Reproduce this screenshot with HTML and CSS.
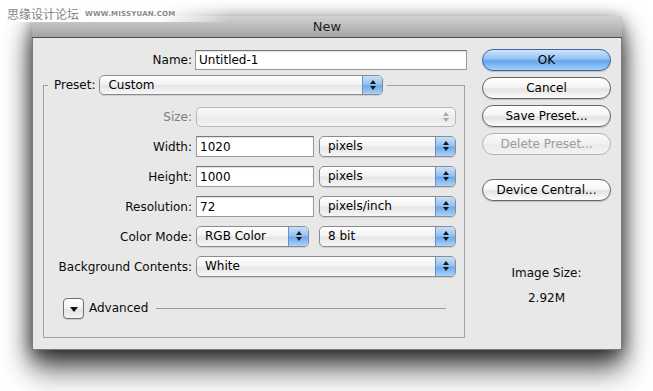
FILE: index.html
```html
<!DOCTYPE html>
<html lang="en">
<head>
    <meta charset="UTF-8">
    <title>New</title>
    <link rel="stylesheet" href="styles.css">
</head>
<body>
    <div class="watermark">
        <span class="wm-cn">思缘设计论坛</span>
        <span class="wm-url">WWW.MISSYUAN.COM</span>
    </div>

    <div class="page">
        <div class="dialog">
            <div class="titlebar">New</div>

            <div class="dialog-body">
                <div class="main">
                    <div class="name-row">
                        <label class="label">Name:</label>
                        <input class="field name-field" type="text" value="Untitled-1">
                    </div>

                    <fieldset class="preset-box">
                        <legend class="preset-legend">
                            <span class="label">Preset:</span>
                            <div class="popup preset-popup">
                                <span class="popup-text">Custom</span>
                                <span class="popup-arrows"></span>
                            </div>
                        </legend>

                        <div class="rows">
                            <div class="row row-size">
                                <span class="label disabled">Size:</span>
                                <div class="controls">
                                    <div class="popup popup-disabled full">
                                        <span class="popup-text"></span>
                                        <span class="popup-arrows"></span>
                                    </div>
                                </div>
                            </div>
                            <div class="row">
                                <span class="label">Width:</span>
                                <div class="controls">
                                    <input class="field num-field" type="text" value="1020">
                                    <div class="popup unit-popup">
                                        <span class="popup-text">pixels</span>
                                        <span class="popup-arrows"></span>
                                    </div>
                                </div>
                            </div>
                            <div class="row">
                                <span class="label">Height:</span>
                                <div class="controls">
                                    <input class="field num-field" type="text" value="1000">
                                    <div class="popup unit-popup">
                                        <span class="popup-text">pixels</span>
                                        <span class="popup-arrows"></span>
                                    </div>
                                </div>
                            </div>
                            <div class="row">
                                <span class="label">Resolution:</span>
                                <div class="controls">
                                    <input class="field num-field" type="text" value="72">
                                    <div class="popup unit-popup">
                                        <span class="popup-text">pixels/inch</span>
                                        <span class="popup-arrows"></span>
                                    </div>
                                </div>
                            </div>
                            <div class="row">
                                <span class="label">Color Mode:</span>
                                <div class="controls">
                                    <div class="popup mode-popup">
                                        <span class="popup-text">RGB Color</span>
                                        <span class="popup-arrows"></span>
                                    </div>
                                    <div class="popup unit-popup">
                                        <span class="popup-text">8 bit</span>
                                        <span class="popup-arrows"></span>
                                    </div>
                                </div>
                            </div>
                            <div class="row">
                                <span class="label">Background Contents:</span>
                                <div class="controls">
                                    <div class="popup full">
                                        <span class="popup-text">White</span>
                                        <span class="popup-arrows"></span>
                                    </div>
                                </div>
                            </div>
                        </div>

                        <div class="advanced">
                            <button class="disclosure"></button>
                            <span class="advanced-text">Advanced</span>
                            <span class="advanced-line"></span>
                        </div>
                    </fieldset>
                </div>

                <div class="side">
                    <button class="btn btn-default">OK</button>
                    <button class="btn">Cancel</button>
                    <button class="btn">Save Preset...</button>
                    <button class="btn" disabled>Delete Preset...</button>
                    <button class="btn btn-device">Device Central...</button>
                    <div class="image-size">
                        <div>Image Size:</div>
                        <div>2.92M</div>
                    </div>
                </div>
            </div>
        </div>
    </div>
</body>
</html>
```

FILE: styles.css
```css
body {
    margin: 0;
    background: #ffffff;
    font-family: 'DejaVu Sans', 'Noto Sans CJK SC', sans-serif;
    font-size: 12px;
    color: #0a0a0a;
}

/* watermark sits over the top-left corner of the window */
.watermark {
    position: absolute;
    top: 0;
    left: 0;
    width: 230px;
    height: 22px;
    padding: 4px 0 0 7px;
    box-sizing: border-box;
    display: flex;
    align-items: center;
    gap: 6px;
    background: linear-gradient(90deg, #ffffff 0%, rgba(255, 255, 255, 0.95) 70%, rgba(255, 255, 255, 0) 100%);
    z-index: 2;
}
.wm-cn {
    font-family: 'Noto Sans CJK SC', sans-serif;
    font-size: 12px;
    color: #858585;
}
.wm-url {
    font-size: 7px;
    font-weight: bold;
    letter-spacing: 0.2px;
    color: #8c8c8c;
    padding-top: 2px;
}

.page {
    min-height: 100vh;
    box-sizing: border-box;
    padding: 16px 0 0 32px;
}

.dialog {
    width: 590px;
    box-sizing: border-box;
    background-color: #e8e8e8;
    border: 1px solid #7a7a7a;
    border-top: none;
    box-shadow: 0 12px 24px rgba(0, 0, 0, 0.75), 0 26px 30px rgba(0, 0, 0, 0.25), 0 2px 14px rgba(0, 0, 0, 0.3);
}

.titlebar {
    height: 21px;
    line-height: 21px;
    text-align: center;
    font-size: 13px;
    color: #1e1e1e;
    background: linear-gradient(#d2d2d2 0%, #bcbcbc 50%, #a4a4a4 100%);
    border-bottom: 1px solid #4f4f4f;
    margin: 0 -1px;
}

.dialog-body {
    display: flex;
    gap: 15px;
    padding: 11px 10px 11px 10px;
}

.main {
    width: 424px;
}

.label {
    text-align: right;
    white-space: nowrap;
    color: #0a0a0a;
}
.label.disabled {
    color: #7d7d7d;
}

.name-row {
    display: grid;
    grid-template-columns: 149px 272px;
    column-gap: 3px;
    align-items: center;
    margin-top: 1px;
}

.field {
    height: 21px;
    box-sizing: border-box;
    margin: 0;
    border: 1px solid #9a9a9a;
    border-top-color: #777;
    background: #ffffff;
    padding: 0 3px;
    font-family: inherit;
    font-size: 12px;
    color: #000;
    box-shadow: inset 0 1px 1px rgba(0, 0, 0, 0.12);
    outline: none;
}
.name-field {
    height: 20px;
}

.preset-box {
    width: 422px;
    box-sizing: border-box;
    min-width: 0;
    margin: 5px 0 0 0;
    padding: 12px 0 18px 0;
    border: 1px solid #a0a0a0;
}

.preset-legend {
    display: flex;
    align-items: center;
    gap: 4px;
    padding: 0 4px 0 6px;
    margin-left: 4px;
}

/* aqua popup menus */
.popup {
    display: flex;
    align-items: stretch;
    height: 21px;
    box-sizing: border-box;
    border: 1px solid #8c8c8c;
    border-radius: 5px;
    background: linear-gradient(#ffffff 0%, #f4f4f4 45%, #e6e6e6 55%, #f7f7f7 100%);
    box-shadow: 0 1px 1px rgba(0, 0, 0, 0.12);
    overflow: hidden;
}
.popup-text {
    flex: 1;
    padding-left: 8px;
    line-height: 19px;
    color: #000;
    white-space: nowrap;
}
.popup-arrows {
    position: relative;
    width: 19px;
    border-left: 1px solid #6b8fc4;
    background: linear-gradient(#c9e0f8 0%, #95c2f1 45%, #6eaaec 55%, #a8d3fa 100%);
}
.popup-arrows::before,
.popup-arrows::after {
    content: '';
    position: absolute;
    left: 7px;
    border-left: 3px solid transparent;
    border-right: 3px solid transparent;
}
.popup-arrows::before {
    top: 4px;
    border-bottom: 4px solid #1a1a1a;
}
.popup-arrows::after {
    top: 10px;
    border-top: 4px solid #1a1a1a;
}

.popup-disabled {
    border-color: #b8b8b8;
    background: linear-gradient(#f9f9f9 0%, #efefef 50%, #e9e9e9 55%, #f3f3f3 100%);
    box-shadow: none;
}
.popup-disabled .popup-arrows {
    border-left: none;
    background: transparent;
}
.popup-disabled .popup-arrows::before {
    border-bottom-color: #a8a8a8;
}
.popup-disabled .popup-arrows::after {
    border-top-color: #a8a8a8;
}

.preset-popup { width: 284px; height: 20px; }
.unit-popup { width: 137px; }
.mode-popup { width: 113px; }
.num-field { width: 118px; }
.full { width: 260px; }

.rows {
    display: flex;
    flex-direction: column;
    gap: 9px;
}
.row {
    display: grid;
    grid-template-columns: 148px 260px;
    column-gap: 4px;
    align-items: center;
}
.row-size .popup {
    height: 20px;
}
.controls {
    display: flex;
    justify-content: space-between;
}

.advanced {
    display: flex;
    align-items: center;
    margin-top: 20px;
    padding-left: 19px;
    padding-right: 18px;
    height: 22px;
}
.disclosure {
    position: relative;
    width: 21px;
    height: 21px;
    padding: 0;
    border: 1px solid #707070;
    border-radius: 4px;
    background: linear-gradient(#ffffff 0%, #f1f1f1 50%, #e2e2e2 55%, #f4f4f4 100%);
    box-shadow: 0 1px 1px rgba(0, 0, 0, 0.15);
}
.disclosure::after {
    content: '';
    position: absolute;
    left: 6px;
    top: 8px;
    border-left: 4px solid transparent;
    border-right: 4px solid transparent;
    border-top: 5px solid #111;
}
.advanced-text {
    margin-left: 5px;
    font-size: 12px;
}
.advanced-line {
    flex: 1;
    height: 1px;
    background-color: #9a9a9a;
    margin-left: 8px;
}

/* right hand buttons */
.side {
    width: 129px;
    display: flex;
    flex-direction: column;
    gap: 6px;
}
.btn {
    height: 22px;
    padding: 0;
    border: 1px solid #666;
    border-radius: 11px;
    font-family: inherit;
    font-size: 12px;
    color: #000;
    background: linear-gradient(#ffffff 0%, #f6f6f6 45%, #e4e4e4 55%, #fbfbfb 100%);
    box-shadow: 0 1px 1px rgba(0, 0, 0, 0.18);
}
.btn:disabled {
    color: #9b9b9b;
    border-color: #b4b4b4;
    background: linear-gradient(#fafafa 0%, #f1f1f1 50%, #e9e9e9 55%, #f4f4f4 100%);
    box-shadow: none;
}
.btn-default {
    border-color: #3f63a3;
    background: linear-gradient(#cfe4fb 0%, #93c1f2 45%, #64a6ec 55%, #9fd0fb 100%);
}
.btn-device {
    margin-top: 18px;
}

.image-size {
    margin-top: 54px;
    text-align: center;
    line-height: 25px;
    color: #0a0a0a;
}
```
